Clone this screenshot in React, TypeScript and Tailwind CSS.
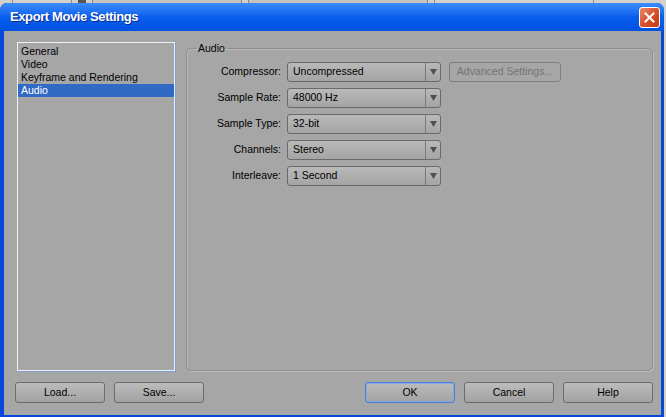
import React from 'react'

const font = { fontFamily: '"Liberation Sans", Arial, sans-serif' }

const rows = [
  { label: 'Compressor:', value: 'Uncompressed' },
  { label: 'Sample Rate:', value: '48000 Hz' },
  { label: 'Sample Type:', value: '32-bit' },
  { label: 'Channels:', value: 'Stereo' },
  { label: 'Interleave:', value: '1 Second' },
]

const pages = ['General', 'Video', 'Keyframe and Rendering', 'Audio']

function Select({ value }: { value: string }) {
  return (
    <div className="flex h-[20px] w-[154px] items-stretch rounded-[3px] border border-[#6a6a6a] bg-gradient-to-b from-[#b9b9b9] to-[#a4a4a4]">
      <div className="flex flex-1 items-center pl-[5px] text-[10.5px] text-black">{value}</div>
      <div className="flex w-[15px] items-center justify-center border-l border-[#7a7a7a]">
        <svg width="7" height="6" viewBox="0 0 7 6">
          <path d="M0 0H7L3.5 6Z" fill="#505050" />
        </svg>
      </div>
    </div>
  )
}

function Button({ children, focused }: { children: React.ReactNode; focused?: boolean }) {
  return (
    <button
      className={`flex h-[21px] w-[90px] items-center justify-center rounded-[3px] border bg-gradient-to-b from-[#bcbcbc] to-[#a2a2a2] text-[10.5px] text-black ${
        focused ? 'border-[#4d7fd6] shadow-[inset_0_0_0_1px_#86a8e4]' : 'border-[#6c6c6c]'
      }`}
    >
      {children}
    </button>
  )
}

export default function App() {
  return (
    <div className="flex h-[417px] w-[666px] flex-col overflow-hidden bg-[#d3d0c9]" style={font}>
      {/* background window tabs peeking out above the dialog */}
      <div className="flex h-[3px] items-start gap-[6px] pl-[12px]">
        <div className="h-[3px] w-[60px] border-x border-[#8a8a8a]" />
        <div className="h-[3px] w-[8px] bg-[#555]" />
        <div className="h-[3px] w-[150px] border-x border-[#8a8a8a] bg-[#c6c3bc]" />
        <div className="h-[3px] w-[180px] border-x border-[#8a8a8a] bg-[#c6c3bc]" />
        <div className="h-[3px] w-[160px] border-x border-[#8a8a8a]" />
      </div>

      <div className="flex w-[664px] flex-1 flex-col rounded-t-[7px] bg-[#0a46dc]">
        {/* Title bar */}
        <div className="flex h-[28px] items-center justify-between rounded-t-[7px] bg-gradient-to-b from-[#3c8cf8] via-[#0a5eee] to-[#0052e0] pl-[10px] pr-[4px]">
          <span className="text-[13px] font-bold tracking-[-0.4px] text-white [text-shadow:1px_1px_0_#0a2a8a]">
            Export Movie Settings
          </span>
          <div className="flex h-[21px] w-[21px] items-center justify-center rounded-[3px] border border-white bg-gradient-to-br from-[#e88868] via-[#d9502a] to-[#c23c14]">
            <svg width="11" height="11" viewBox="0 0 11 11">
              <path d="M1.5 1.5L9.5 9.5M9.5 1.5L1.5 9.5" stroke="white" strokeWidth="2" strokeLinecap="square" />
            </svg>
          </div>
        </div>

        {/* Body */}
        <div className="mb-[2px] ml-[4px] mr-[3px] flex flex-1 flex-col bg-[#a6a6a6]">
          <div className="flex h-[340px] gap-[11px] pl-[13px] pr-[8px] pt-[11px]">
            {/* page list */}
            <div className="flex w-[158px] flex-col border border-[#eef2f8] py-[2px] shadow-[1px_1px_0_#7c9fd3] text-[10.5px] leading-[13px] text-black">
              {pages.map((p) => (
                <div
                  key={p}
                  className={`h-[13px] pl-[3px] ${p === 'Audio' ? 'bg-[#316ac5] text-white' : ''}`}
                >
                  {p}
                </div>
              ))}
            </div>

            {/* group box */}
            <fieldset className="flex-1 rounded-[5px] border border-[#8e8e8e] px-0 pb-0 shadow-[inset_1px_1px_0_#b8b8b8,1px_1px_0_#bdbdbd]">
              <legend className="ml-[9px] px-[2px] text-[10.5px] leading-[13px] text-black">Audio</legend>
              <div className="mt-[7px] flex flex-col gap-[6px]">
                {rows.map((r, i) => (
                  <div key={r.label} className="flex items-center">
                    <div className="w-[94px] text-right text-[10.5px] text-black">{r.label}</div>
                    <div className="ml-[6px]">
                      <Select value={r.value} />
                    </div>
                    {i === 0 && (
                      <div className="ml-[8px] flex h-[20px] w-[112px] items-center justify-center rounded-[3px] border border-[#7e7e7e] text-[10.5px] text-[#747474]">
                        Advanced Settings...
                      </div>
                    )}
                  </div>
                ))}
              </div>
            </fieldset>
          </div>

          {/* bottom buttons */}
          <div className="flex items-center pl-[11px] pr-[8px] pt-[11px]">
            <div className="flex gap-[9px]">
              <Button>Load...</Button>
              <Button>Save...</Button>
            </div>
            <div className="ml-auto flex gap-[9px]">
              <Button focused>OK</Button>
              <Button>Cancel</Button>
              <Button>Help</Button>
            </div>
          </div>
        </div>
      </div>
    </div>
  )
}
